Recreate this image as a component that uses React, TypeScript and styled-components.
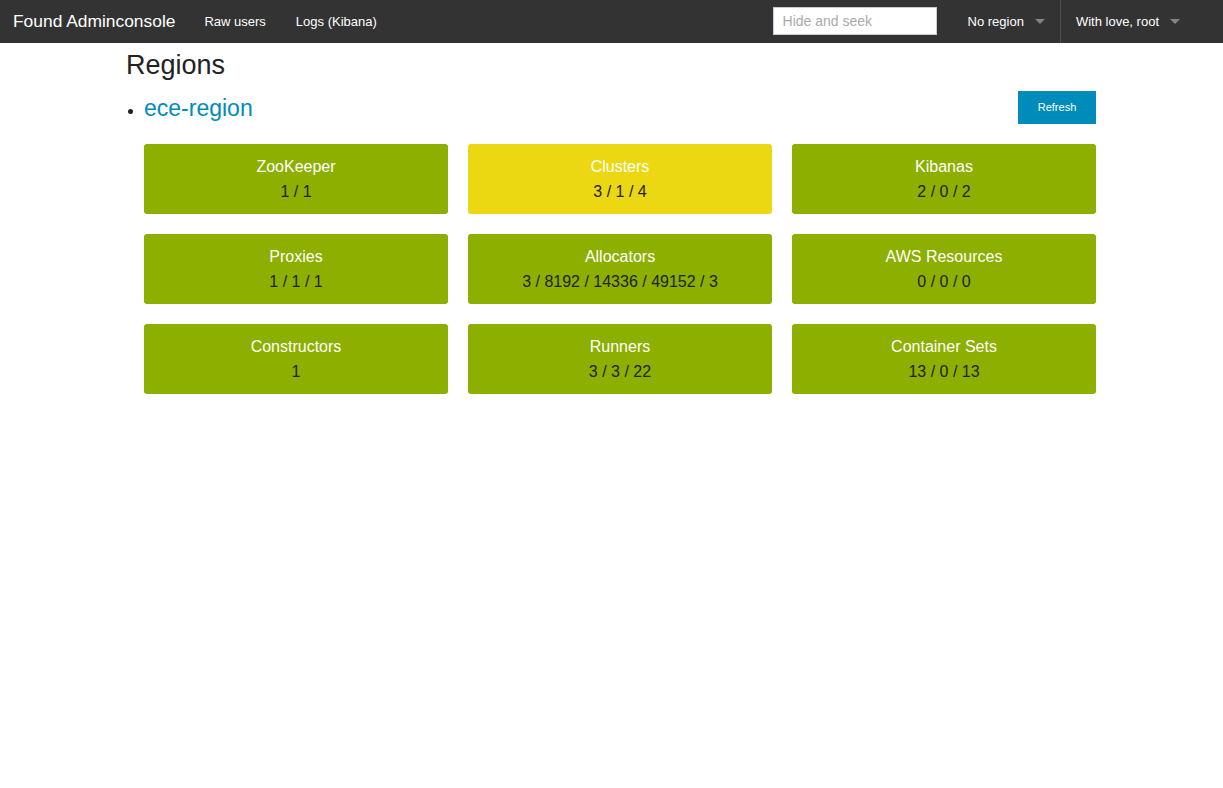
import React from "react";
import styled, { createGlobalStyle } from "styled-components";

const GlobalStyle = createGlobalStyle`
  body {
    margin: 0;
    font-family: "Liberation Sans", Arial, sans-serif;
    color: #222;
    background: #fff;
  }
  * { box-sizing: border-box; }
`;

const TopBar = styled.nav`
    display: flex;
    align-items: center;
    height: 43px;
    background: #333;
    color: #fff;
  `,
  Brand = styled.a`
    font-size: 17.4px;
    color: #fff;
    padding: 0 14px 0 13px;
    line-height: 43px;
    text-decoration: none;
  `,
  NavLink = styled.a`
    font-size: 13px;
    color: #fff;
    padding: 0 15px;
    line-height: 43px;
    text-decoration: none;
  `,
  Spacer = styled.div`
    flex: 1;
  `,
  Search = styled.input`
    width: 164px;
    height: 28px;
    border: 1px solid #ccc;
    padding: 0 9px;
    font-family: inherit;
    font-size: 14px;
    margin: -1px 16px 0 0;
    color: #222;
    &::placeholder {
      color: #aaa;
    }
  `,
  Dropdown = styled.div<{ divider?: boolean }>`
    display: flex;
    align-items: center;
    height: 43px;
    font-size: 13px;
    padding: 0 15px;
    border-left: ${({ divider }) => (divider ? "1px solid #4e4e4e" : "none")};
    &::after {
      content: "";
      border: 5px solid transparent;
      border-top-color: rgba(255, 255, 255, 0.4);
      margin-left: 11px;
      margin-top: 5px;
    }
  `,
  UserMenu = styled(Dropdown)`
    margin-right: 28px;
  `;

const Page = styled.main`
    max-width: 999px;
    margin: 0 auto;
    padding: 0 15px 0 14px;
  `,
  Title = styled.h1`
    font-size: 27px;
    font-weight: 400;
    margin: 5px 0 0;
    line-height: 1.3;
  `,
  RegionList = styled.ul`
    margin: 5px 0 0;
    padding-left: 18px;
    list-style: disc;
  `,
  RegionHead = styled.div`
    display: flex;
    align-items: center;
    justify-content: space-between;
    height: 40px;
  `,
  RegionLink = styled.a`
    color: #008cba;
    font-size: 23px;
    text-decoration: none;
  `,
  RefreshButton = styled.button`
    width: 78px;
    height: 33px;
    margin-top: -2px;
    background: #008cba;
    color: #fff;
    border: none;
    font-family: inherit;
    font-size: 11px;
    cursor: pointer;
  `,
  Grid = styled.div`
    display: grid;
    grid-template-columns: repeat(3, 1fr);
    gap: 20px;
    margin-top: 16px;
  `,
  Card = styled.div<{ warn?: boolean }>`
    height: 70px;
    border-radius: 3px;
    background: ${({ warn }) => (warn ? "#ecd812" : "#8caf00")};
    text-align: center;
    padding-top: 10px;
    font-size: 16px;
    line-height: 25px;
  `,
  CardName = styled.div`
    color: #fff;
  `,
  CardValue = styled.div`
    color: #222;
  `;

const cards = [
  { name: "ZooKeeper", value: "1 / 1" },
  { name: "Clusters", value: "3 / 1 / 4", warn: true },
  { name: "Kibanas", value: "2 / 0 / 2" },
  { name: "Proxies", value: "1 / 1 / 1" },
  { name: "Allocators", value: "3 / 8192 / 14336 / 49152 / 3" },
  { name: "AWS Resources", value: "0 / 0 / 0" },
  { name: "Constructors", value: "1" },
  { name: "Runners", value: "3 / 3 / 22" },
  { name: "Container Sets", value: "13 / 0 / 13" },
];

const App: React.FC = () => (
  <>
    <GlobalStyle />
    <TopBar>
      <Brand href="#">Found Adminconsole</Brand>
      <NavLink href="#">Raw users</NavLink>
      <NavLink href="#">Logs (Kibana)</NavLink>
      <Spacer />
      <Search placeholder="Hide and seek" />
      <Dropdown>No region</Dropdown>
      <UserMenu divider>With love, root</UserMenu>
    </TopBar>
    <Page>
      <Title>Regions</Title>
      <RegionList>
        <li>
          <RegionHead>
            <RegionLink href="#">ece-region</RegionLink>
            <RefreshButton>Refresh</RefreshButton>
          </RegionHead>
          <Grid>
            {cards.map((c) => (
              <Card key={c.name} warn={c.warn}>
                <CardName>{c.name}</CardName>
                <CardValue>{c.value}</CardValue>
              </Card>
            ))}
          </Grid>
        </li>
      </RegionList>
    </Page>
  </>
);

export default App;
